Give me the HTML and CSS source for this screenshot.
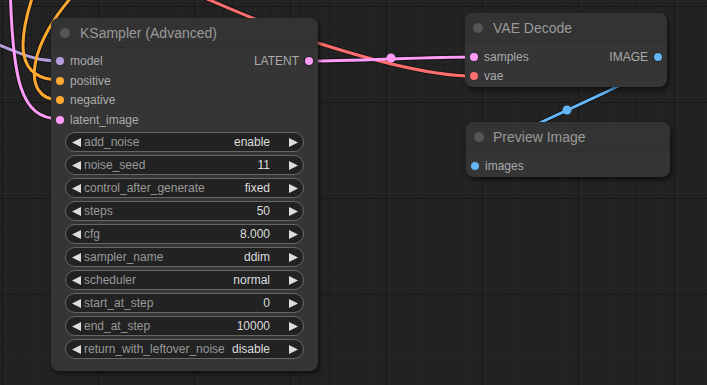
FILE: index.html
```html
<!DOCTYPE html>
<html>
  <head>
    <meta charset="utf-8">
    <title>KSampler (Advanced)</title>
    <link rel="stylesheet" href="styles.css">
  </head>
  <body>
    <div class="canvas">
      <svg class="links" width="707" height="385" viewBox="0 0 707 385">
        <g class="shadow">
          <path d="M 190 -8 C 230 8, 270 27, 318 43 C 368 59, 428 76, 472 76"/>
          <path d="M 658 56 C 711 56, 422 165, 475 165"/>
          <path d="M -20 38 C 20 52, 30 61, 60 61"/>
          <path d="M 10 -20 C 12 80, 20 119, 60 119"/>
          <path d="M 34 -8 C 18 40, 14 80, 60 80"/>
          <path d="M 78 -10 C 30 40, 18 100, 60 100"/>
          <path d="M 309 61 C 350 61, 431 57, 472 57"/>
        </g>
        <path class="link link-vae" d="M 190 -8 C 230 8, 270 27, 318 43 C 368 59, 428 76, 472 76"/>
        <path class="link link-image" d="M 658 56 C 711 56, 422 165, 475 165"/>
        <path class="link link-model" d="M -20 38 C 20 52, 30 61, 60 61"/>
        <path class="link link-latent" d="M 10 -20 C 12 80, 20 119, 60 119"/>
        <path class="link link-cond" d="M 34 -8 C 18 40, 14 80, 60 80"/>
        <path class="link link-cond" d="M 78 -10 C 30 40, 18 100, 60 100"/>
        <path class="link link-latent" d="M 309 61 C 350 61, 431 57, 472 57"/>
        <circle class="mid mid-latent" cx="391" cy="58" r="4.5"/>
        <circle class="mid mid-image" cx="567" cy="110" r="4.5"/>
      </svg>

      <div class="node node-ksampler">
        <div class="node-title"><span class="title-dot"></span>KSampler (Advanced)</div>
        <div class="node-body">
          <div class="slots">
            <div class="slot-col">
              <div class="slot"><span class="dot dot-model"></span>model</div>
              <div class="slot"><span class="dot dot-cond"></span>positive</div>
              <div class="slot"><span class="dot dot-cond"></span>negative</div>
              <div class="slot"><span class="dot dot-latent"></span>latent_image</div>
            </div>
            <div class="slot-col slot-col-out">
              <div class="slot slot-out">LATENT<span class="dot dot-latent"></span></div>
            </div>
          </div>
          <div class="widgets">
            <div class="widget">
              <svg class="arrow" width="9" height="9"><polygon points="9,0 0,4.5 9,9"/></svg>
              <span class="w-label">add_noise</span><span class="w-value">enable</span>
              <svg class="arrow" width="9" height="9"><polygon points="0,0 9,4.5 0,9"/></svg>
            </div>
            <div class="widget">
              <svg class="arrow" width="9" height="9"><polygon points="9,0 0,4.5 9,9"/></svg>
              <span class="w-label">noise_seed</span><span class="w-value">11</span>
              <svg class="arrow" width="9" height="9"><polygon points="0,0 9,4.5 0,9"/></svg>
            </div>
            <div class="widget">
              <svg class="arrow" width="9" height="9"><polygon points="9,0 0,4.5 9,9"/></svg>
              <span class="w-label">control_after_generate</span><span class="w-value">fixed</span>
              <svg class="arrow" width="9" height="9"><polygon points="0,0 9,4.5 0,9"/></svg>
            </div>
            <div class="widget">
              <svg class="arrow" width="9" height="9"><polygon points="9,0 0,4.5 9,9"/></svg>
              <span class="w-label">steps</span><span class="w-value">50</span>
              <svg class="arrow" width="9" height="9"><polygon points="0,0 9,4.5 0,9"/></svg>
            </div>
            <div class="widget">
              <svg class="arrow" width="9" height="9"><polygon points="9,0 0,4.5 9,9"/></svg>
              <span class="w-label">cfg</span><span class="w-value">8.000</span>
              <svg class="arrow" width="9" height="9"><polygon points="0,0 9,4.5 0,9"/></svg>
            </div>
            <div class="widget">
              <svg class="arrow" width="9" height="9"><polygon points="9,0 0,4.5 9,9"/></svg>
              <span class="w-label">sampler_name</span><span class="w-value">ddim</span>
              <svg class="arrow" width="9" height="9"><polygon points="0,0 9,4.5 0,9"/></svg>
            </div>
            <div class="widget">
              <svg class="arrow" width="9" height="9"><polygon points="9,0 0,4.5 9,9"/></svg>
              <span class="w-label">scheduler</span><span class="w-value">normal</span>
              <svg class="arrow" width="9" height="9"><polygon points="0,0 9,4.5 0,9"/></svg>
            </div>
            <div class="widget">
              <svg class="arrow" width="9" height="9"><polygon points="9,0 0,4.5 9,9"/></svg>
              <span class="w-label">start_at_step</span><span class="w-value">0</span>
              <svg class="arrow" width="9" height="9"><polygon points="0,0 9,4.5 0,9"/></svg>
            </div>
            <div class="widget">
              <svg class="arrow" width="9" height="9"><polygon points="9,0 0,4.5 9,9"/></svg>
              <span class="w-label">end_at_step</span><span class="w-value">10000</span>
              <svg class="arrow" width="9" height="9"><polygon points="0,0 9,4.5 0,9"/></svg>
            </div>
            <div class="widget">
              <svg class="arrow" width="9" height="9"><polygon points="9,0 0,4.5 9,9"/></svg>
              <span class="w-label">return_with_leftover_noise</span><span class="w-value">disable</span>
              <svg class="arrow" width="9" height="9"><polygon points="0,0 9,4.5 0,9"/></svg>
            </div>
          </div>
        </div>
      </div>

      <div class="node node-vae">
        <div class="node-title"><span class="title-dot"></span>VAE Decode</div>
        <div class="node-body">
          <div class="slots">
            <div class="slot-col">
              <div class="slot"><span class="dot dot-latent"></span>samples</div>
              <div class="slot"><span class="dot dot-vae"></span>vae</div>
            </div>
            <div class="slot-col slot-col-out">
              <div class="slot slot-out">IMAGE<span class="dot dot-image"></span></div>
            </div>
          </div>
        </div>
      </div>

      <div class="node node-preview">
        <div class="node-title"><span class="title-dot"></span>Preview Image</div>
        <div class="node-body">
          <div class="slots">
            <div class="slot-col">
              <div class="slot"><span class="dot dot-image"></span>images</div>
            </div>
          </div>
        </div>
      </div>
    </div>
  </body>
</html>
```
FILE: styles.css
```css
body {
  margin: 0;
  background: #222;
  font-family: "Liberation Sans", Arial, sans-serif;
  overflow: hidden;
}

.canvas {
  position: relative;
  width: 707px;
  height: 385px;
  background-color: #232323;
  background-image:
    linear-gradient(rgba(0, 0, 0, 0.22) 1px, transparent 1px),
    linear-gradient(90deg, rgba(0, 0, 0, 0.22) 1px, transparent 1px),
    linear-gradient(rgba(0, 0, 0, 0.12) 1px, transparent 1px),
    linear-gradient(90deg, rgba(0, 0, 0, 0.12) 1px, transparent 1px);
  background-size: 96px 96px, 96px 96px, 9.6px 9.6px, 9.6px 9.6px;
  background-position: 2px 6px, 2px 6px, 2px 6px, 2px 6px;
}

/* links */

.links {
  position: absolute;
  left: 0;
  top: 0;
}

.links path {
  fill: none;
}

.shadow path {
  stroke: rgba(0, 0, 0, 0.45);
  stroke-width: 5;
}

.link {
  stroke-width: 3;
}

.link-vae { stroke: #ff6e6e; }
.link-image { stroke: #64b5f6; }
.link-model { stroke: #b39ddb; }
.link-latent { stroke: #ff9cf9; }
.link-cond { stroke: #ffa931; }

.mid-latent { fill: #ff9cf9; }
.mid-image { fill: #64b5f6; }

/* nodes */

.node {
  position: absolute;
  background: #353535;
  border-radius: 8px;
  box-shadow: 2px 3px 4px rgba(0, 0, 0, 0.5);
}

.node-ksampler {
  left: 51px;
  top: 18px;
  width: 267px;
}

.node-vae {
  left: 465px;
  top: 13px;
  width: 202px;
}

.node-preview {
  left: 466px;
  top: 122px;
  width: 204px;
}

.node-title {
  display: flex;
  align-items: center;
  height: 30px;
  box-sizing: border-box;
  padding-left: 9px;
  border-bottom: 1px solid #2e2e2e;
  border-radius: 8px 8px 0 0;
  background: #333;
  color: #9a9a9a;
  font-size: 14px;
}

.node-vae .node-title,
.node-preview .node-title {
  padding-left: 8px;
}

.title-dot {
  width: 10px;
  height: 10px;
  margin-right: 10px;
  border-radius: 50%;
  background: #555;
}

.node-preview .title-dot {
  margin-right: 9px;
}

.node-body {
  padding: 3.5px 0 12px;
}

.node-vae .node-body,
.node-preview .node-body {
  padding: 4px 0 1px;
}

.slots {
  display: flex;
  justify-content: space-between;
}

.slot {
  display: flex;
  align-items: center;
  height: 19.5px;
  color: #aaa;
  font-size: 12px;
}

.slot-col-out .slot {
  justify-content: flex-end;
}

.dot {
  width: 8px;
  height: 8px;
  margin: 0 6px 0 5px;
  border-radius: 50%;
}

.slot-out .dot {
  margin: 0 5px 0 6px;
  box-shadow: 0 0 0 1px rgba(0, 0, 0, 0.35);
}

.dot-model { background: #b39ddb; }
.dot-cond { background: #ffa931; }
.dot-latent { background: #ff9cf9; }
.dot-vae { background: #ff6e6e; }
.dot-image { background: #64b5f6; }

/* widgets */

.widgets {
  display: flex;
  flex-direction: column;
  gap: 3px;
  margin: 2.5px 14px 0;
}

.widget {
  display: flex;
  align-items: center;
  height: 20px;
  box-sizing: border-box;
  padding: 0 5px 0 6px;
  border: 1px solid #666;
  border-radius: 10px;
  background: #222;
  font-size: 12px;
}

.arrow {
  flex: none;
  fill: #ddd;
}

.w-label {
  flex: 1;
  margin-left: 3px;
  color: #999;
  white-space: nowrap;
}

.w-value {
  margin-right: 19px;
  color: #ddd;
}
```
